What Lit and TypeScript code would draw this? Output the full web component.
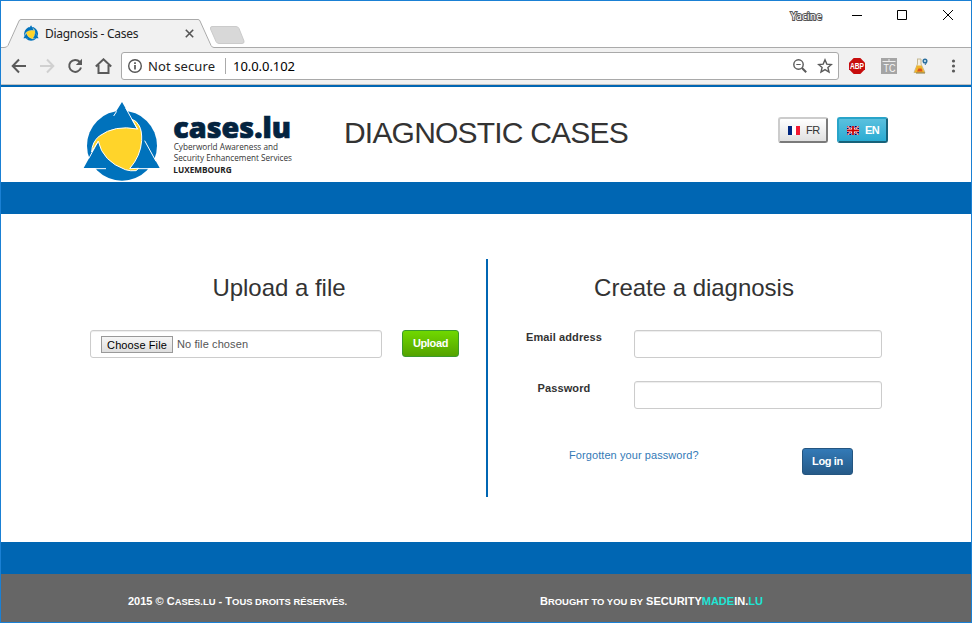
import { LitElement, html, css, svg } from "lit";
import { customElement, property } from "lit/decorators.js";

const mark = svg`
  <g transform="translate(36 30)">
    <circle cx="120" cy="137" r="105" fill="#0072bc"/>
    <path d="M120 6L167 88L76 96L96 44ZM188 122L233 204H142ZM50 122L5 204H100Z" fill="#0072bc"/>
    <path d="M29 156Q30 126 52 108Q98 74 166 87L150 58Q164 62 172 78Q180 92 179 122Q176 168 143 206L170 205L162 212Q146 214 130 209Q62 184 49 124Q38 138 29 156Z" fill="#ffd42a" stroke="#fff" stroke-width="3" stroke-linejoin="round"/>
    <path d="M131 24L167 88M95 48L104 34M49 123L20 176M188 122L222 184M28 206H72M164 206H216" fill="none" stroke="#fff" stroke-width="3"/>
  </g>
`;

@customElement("browser-bar")
export class BrowserBar extends LitElement {
  static styles = css`
    :host { display: block; height: 84px; font-family: "Noto Sans", "Open Sans", sans-serif; color: #222; }
    svg { display: block; flex: none; }
    .strip { position: relative; height: 46px; background: #fff; display: flex; align-items: flex-end; justify-content: space-between; }
    .shape { position: absolute; inset: 0; }
    .tab { position: relative; display: flex; align-items: center; height: 28px; padding-left: 22px; }
    .title { font-size: 12px; width: 94px; margin: 0 46px 0 6px; letter-spacing: -0.28px; white-space: nowrap; }
    .controls { position: relative; display: flex; align-items: flex-start; height: 46px; }
    .user { font-size: 10px; line-height: 14px; margin: 8px 29px 0 0; color: #fff; -webkit-text-stroke: 2px #555; paint-order: stroke fill; letter-spacing: 0.2px; }
    .bar { height: 38px; background: #f1f1f1; display: flex; align-items: center; padding-left: 10px; border-bottom: 1px solid #c0c0c0; box-sizing: border-box; }
    .nav { margin-right: 12px; }
    .omni { flex: none; display: flex; align-items: center; width: 718px; height: 28px; box-sizing: border-box; border: 1px solid #a9a9a9; border-radius: 3px; background: #fff; font-size: 13px; margin-left: -3px; padding-left: 5px; }
    .state { width: 67px; margin-left: 5px; white-space: nowrap; letter-spacing: 0.1px; }
    .sep { width: 1px; height: 16px; background: #aaa; margin: 0 7px 0 10px; }
    .url { flex: 1; color: #000; letter-spacing: -0.05px; }
    .star { margin: 0 5px 0 9px; }
    .abp { margin-left: 10px; overflow: visible; }
    .tc, .flask, .more { margin-left: 16px; }
  `;

  render() {
    return html`
      <div class="strip">
        <svg class="shape" width="970" height="47" fill="none">
          <path d="M0 47H5Q7 46 8 44L18 20Q18.500 18.500 20 18.500H197Q198.500 18.500 199 20L209 44Q210 47 212 47Z" fill="#f1f1f1"/>
          <path d="M0 46.500H3Q6 46.500 7 44.500L18 20Q18.500 18.500 20 18.500H197Q198.500 18.500 199 20L210 44.500Q211 46.500 213 46.500H970" stroke="#aaa"/>
          <path d="M211 25.500H235Q237 25.500 238 27.500L243 40Q243.500 42.500 241 42.500H218Q216 42.500 215 40.500L209.500 28Q209 25.500 211 25.500Z" fill="#d8d8d8" stroke="#cbcbcb"/>
        </svg>
        <div class="tab">
          <svg width="16" height="16" viewBox="38 34 234 240">${mark}</svg>
          <span class="title">Diagnosis - Cases</span>
          <svg width="9" height="9" viewBox="0 0 9 9"><path d="M.8.8l7.400 7.400M8.200.8L.8 8.200" stroke="#555" stroke-width="1.600"/></svg>
        </div>
        <div class="controls">
          <span class="user">Yacine</span>
          <svg width="120" height="30" fill="none" stroke="#000"><path d="M1 14.500h10M46.500 9.500h9v9h-9zM92 9l10 10M102 9l-10 10"/></svg>
        </div>
      </div>
      <div class="bar">
        <svg class="nav" width="16" height="16" viewBox="0 0 16 16" fill="none" stroke="#5a5a5a" stroke-width="2"><path d="M15 8H2M8 1.500L1.700 8 8 14.500"/></svg>
        <svg class="nav" width="16" height="16" viewBox="0 0 16 16" fill="none" stroke="#d0d0d0" stroke-width="2"><path d="M1 8h13M8 1.500L14.300 8 8 14.500"/></svg>
        <svg class="nav" width="16" height="16" viewBox="0 0 16 16"><path d="M12.800 4A6 6 0 1 0 14 9.500" fill="none" stroke="#5a5a5a" stroke-width="2"/><path d="M15 .8V7H8.800z" fill="#5a5a5a"/></svg>
        <svg class="nav" width="17" height="16" viewBox="0 0 17 16" fill="none" stroke="#5a5a5a" stroke-width="2"><path d="M.8 8.500L8.500 1.300 16.200 8.500M3.500 7v8h10V7"/></svg>
        <div class="omni">
          <svg width="16" height="16" viewBox="0 0 16 16" fill="none" stroke="#555"><circle cx="8" cy="8" r="6.300" stroke-width="1.400"/><path d="M8 7v4.500M8 4.300v1.600" stroke-width="1.700"/></svg>
          <span class="state">Not secure</span><span class="sep"></span><span class="url">10.0.0.102</span>
          <svg width="16" height="16" viewBox="0 0 16 16" fill="none" stroke="#5a5a5a"><circle cx="6.500" cy="6.500" r="4.700" stroke-width="1.400"/><path d="M10 10l4.200 4.200" stroke-width="2"/><path d="M4.300 6.500h4.400"/></svg>
          <svg class="star" width="16" height="16" viewBox="0 0 16 16" fill="none" stroke="#5a5a5a" stroke-width="1.400"><path d="M8 1.800l1.800 4.300 4.600.4-3.500 3 1.100 4.500L8 11.600 4 14l1.100-4.500-3.500-3 4.600-.4z"/></svg>
        </div>
        <svg class="abp" width="16" height="16" viewBox="0 0 16 16"><path d="M4.700 0h6.600L16 4.700v6.600L11.300 16H4.700L0 11.300V4.700z" fill="#c70d0d"/><text x="1" y="11" font-family="Liberation Sans, sans-serif" font-weight="700" font-size="8.500" textLength="14" lengthAdjust="spacingAndGlyphs" fill="#fff">ABP</text></svg>
        <svg class="tc" width="16" height="16"><rect width="16" height="16" fill="#a5a5a5"/><path d="M1.500 3.500h13M8 1v2.500" stroke="#eee"/><text x="2.500" y="14" font-family="Liberation Sans, sans-serif" font-size="11" textLength="12" lengthAdjust="spacingAndGlyphs" fill="#f6f6f6">TC</text></svg>
        <svg class="flask" width="16" height="16" viewBox="0 0 16 16"><path d="M4 1h4M4.500 1v5L1 14.500h11L8 6V1" fill="#f5efe0" stroke="#c4b893"/><path d="M3.800 7.500h4.700l3 7h-10z" fill="#f0b429"/><path d="M5.500 10.500h3l1 3H4z" fill="#d9541e"/><path d="M3 15h9" stroke="#8a7a3a"/><circle cx="12" cy="3" r="1.800" fill="#d5e9f5" stroke="#2b6f9e" stroke-width="1.500"/><path d="M13.700 4L12 7" stroke="#2b6f9e"/></svg>
        <svg class="more" width="16" height="16" viewBox="0 0 16 16" fill="#5a5a5a"><circle cx="8.500" cy="3" r="1.600"/><circle cx="8.500" cy="8" r="1.600"/><circle cx="8.500" cy="13" r="1.600"/></svg>
      </div>
    `;
  }
}

@customElement("site-header")
export class SiteHeader extends LitElement {
  static styles = css`
    :host { display: block; border-top: 2px solid #0066b3; }
    .row { display: flex; align-items: flex-start; height: 95px; padding-left: 69px; }
    svg { display: block; flex: none; }
    .logo { margin-top: 3px; font-family: "Open Sans", sans-serif; }
    h1 { margin: 29px 0 0 34px; width: 284px; font-size: 30px; line-height: 33px; font-weight: 400; color: #333; white-space: nowrap; letter-spacing: -0.8px; }
    .langs { display: flex; gap: 9px; margin: 30px 0 0 150px; }
    .lang { display: flex; align-items: center; box-sizing: border-box; width: 50px; height: 26px; padding-left: 8px; gap: 6px; font-size: 11px; letter-spacing: -0.5px; color: #333; border: 2px solid; border-radius: 3px; background: linear-gradient(#fff, #e0e0e0); border-color: #ccc #7a7a7a #7a7a7a #ccc; }
    .on { width: 51px; font-weight: 700; color: #fff; background: linear-gradient(#5bc0de, #2aabd2); border-color: #28a4c9 #17627a #17627a #28a4c9; }
    .band { height: 32px; background: #0066b3; }
  `;

  render() {
    return html`
      <div class="row">
        <svg class="logo" width="240" height="92" viewBox="0 0 720 276">
          ${mark}
          <text x="310" y="143" font-size="82" font-weight="800" fill="#04233f" stroke="#04233f" stroke-width="2" textLength="353" lengthAdjust="spacingAndGlyphs">cases.lu</text>
          <text x="311" y="181" font-size="25" fill="#333" textLength="313" lengthAdjust="spacingAndGlyphs">Cyberworld Awareness and</text>
          <text x="311" y="212" font-size="25" fill="#333" textLength="355" lengthAdjust="spacingAndGlyphs">Security Enhancement Services</text>
          <text x="310" y="248" font-size="24" font-weight="700" fill="#222" textLength="175" lengthAdjust="spacingAndGlyphs">LUXEMBOURG</text>
        </svg>
        <h1>DIAGNOSTIC CASES</h1>
        <div class="langs">
          <div class="lang"><svg width="12" height="9"><path d="M0 0h4v9H0z" fill="#00267f"/><path d="M4 0h4v9H4z" fill="#fff"/><path d="M8 0h4v9H8z" fill="#f31830"/></svg>FR</div>
          <div class="lang on"><svg width="12" height="9" viewBox="0 0 12 9"><path d="M0 0h12v9H0z" fill="#006"/><path d="M0 0l12 9M12 0L0 9" stroke="#fff" stroke-width="1.800"/><path d="M0 0l12 9M12 0L0 9" stroke="#c00" stroke-width=".8"/><path d="M6 0v9M0 4.500h12" stroke="#fff" stroke-width="3"/><path d="M6 0v9M0 4.500h12" stroke="#c00" stroke-width="1.800"/></svg>EN</div>
        </div>
      </div>
      <div class="band"></div>
    `;
  }
}

@customElement("text-field")
export class TextField extends LitElement {
  @property() label = "";

  static styles = css`
    :host { display: flex; height: 28px; margin-bottom: 23px; }
    label { width: 140px; text-align: center; font-size: 11px; line-height: 15px; font-weight: 700; letter-spacing: 0.1px; }
    .box { width: 248px; box-sizing: border-box; border: 1px solid #ccc; border-radius: 3px; background: #fff; box-shadow: inset 0 1px 1px rgba(0, 0, 0, 0.075); }
  `;

  render() {
    return html`<label>${this.label}</label><div class="box"></div>`;
  }
}

@customElement("app-root")
export class AppRoot extends LitElement {
  static styles = css`
    :host { display: flex; flex-direction: column; box-sizing: border-box; width: 972px; height: 623px; border: 1px solid #1a80d4; background: #fff; font-family: "Liberation Sans", Arial, sans-serif; color: #333; overflow: hidden; }
    main { display: flex; height: 328px; box-sizing: border-box; padding: 45px 0 45px 89px; }
    h2 { margin: 15px 0 0; font-size: 24px; line-height: 27px; font-weight: 400; text-align: center; white-space: nowrap; letter-spacing: -0.02px; }
    .left { width: 396px; border-right: 2px solid #0066b3; }
    .left h2 { width: 378px; }
    .upload { display: flex; margin-top: 29px; gap: 20px; }
    .file { display: flex; align-items: center; box-sizing: border-box; width: 292px; height: 28px; padding-left: 10px; border: 1px solid #ccc; border-radius: 3px; font-size: 11px; color: #555; box-shadow: inset 0 1px 1px rgba(0, 0, 0, 0.075); letter-spacing: 0.1px; }
    .choose { box-sizing: border-box; width: 72px; height: 17px; margin: 1px 4px 0 0; border: 1px solid #999; background: linear-gradient(#f6f6f6, #dedede); color: #000; line-height: 16px; text-align: center; white-space: nowrap; }
    .btn { box-sizing: border-box; height: 27px; line-height: 25px; text-align: center; font-size: 11px; letter-spacing: -0.35px; font-weight: 700; color: #fff; border-radius: 3px; }
    .green { width: 57px; border: 1px solid #3b9a2c; background: linear-gradient(#70d800, #54a300); }
    .blue { width: 51px; border: 1px solid #245580; background: linear-gradient(#337ab7, #265a88); }
    .right { width: 396px; padding-left: 7px; }
    .right h2 { width: 398px; margin-bottom: 29px; }
    text-field { margin-left: -1px; }
    .actions { display: flex; margin-top: 39px; padding-left: 74px; }
    a { width: 233px; font-size: 11px; line-height: 15px; color: #337ab7; letter-spacing: 0.08px; }
    .band { height: 32px; background: #0066b3; }
    footer { display: flex; height: 48px; background: #666; padding-left: 127px; color: #fff; font-size: 11px; line-height: 54px; font-weight: 700; white-space: nowrap; box-sizing: border-box; }
    small { font-size: 9.45px; text-transform: uppercase; }
    .copy { width: 412px; }
    .cyan { color: #1fe5d5; }
  `;

  render() {
    return html`
      <browser-bar></browser-bar>
      <site-header></site-header>
      <main>
        <section class="left">
          <h2>Upload a file</h2>
          <div class="upload">
            <div class="file"><span class="choose">Choose File</span>No file chosen</div>
            <div class="btn green">Upload</div>
          </div>
        </section>
        <section class="right">
          <h2>Create a diagnosis</h2>
          <text-field label="Email address"></text-field>
          <text-field label="Password"></text-field>
          <div class="actions"><a>Forgotten your password?</a><div class="btn blue">Log in</div></div>
        </section>
      </main>
      <div class="band"></div>
      <footer>
        <span class="copy">2015 © C<small>ases.lu</small> - T<small>ous droits réservés.</small></span>
        <span>B<small>rought to you by</small> SECURITY<span class="cyan">MADE</span>IN.<span class="cyan">LU</span></span>
      </footer>
    `;
  }
}
